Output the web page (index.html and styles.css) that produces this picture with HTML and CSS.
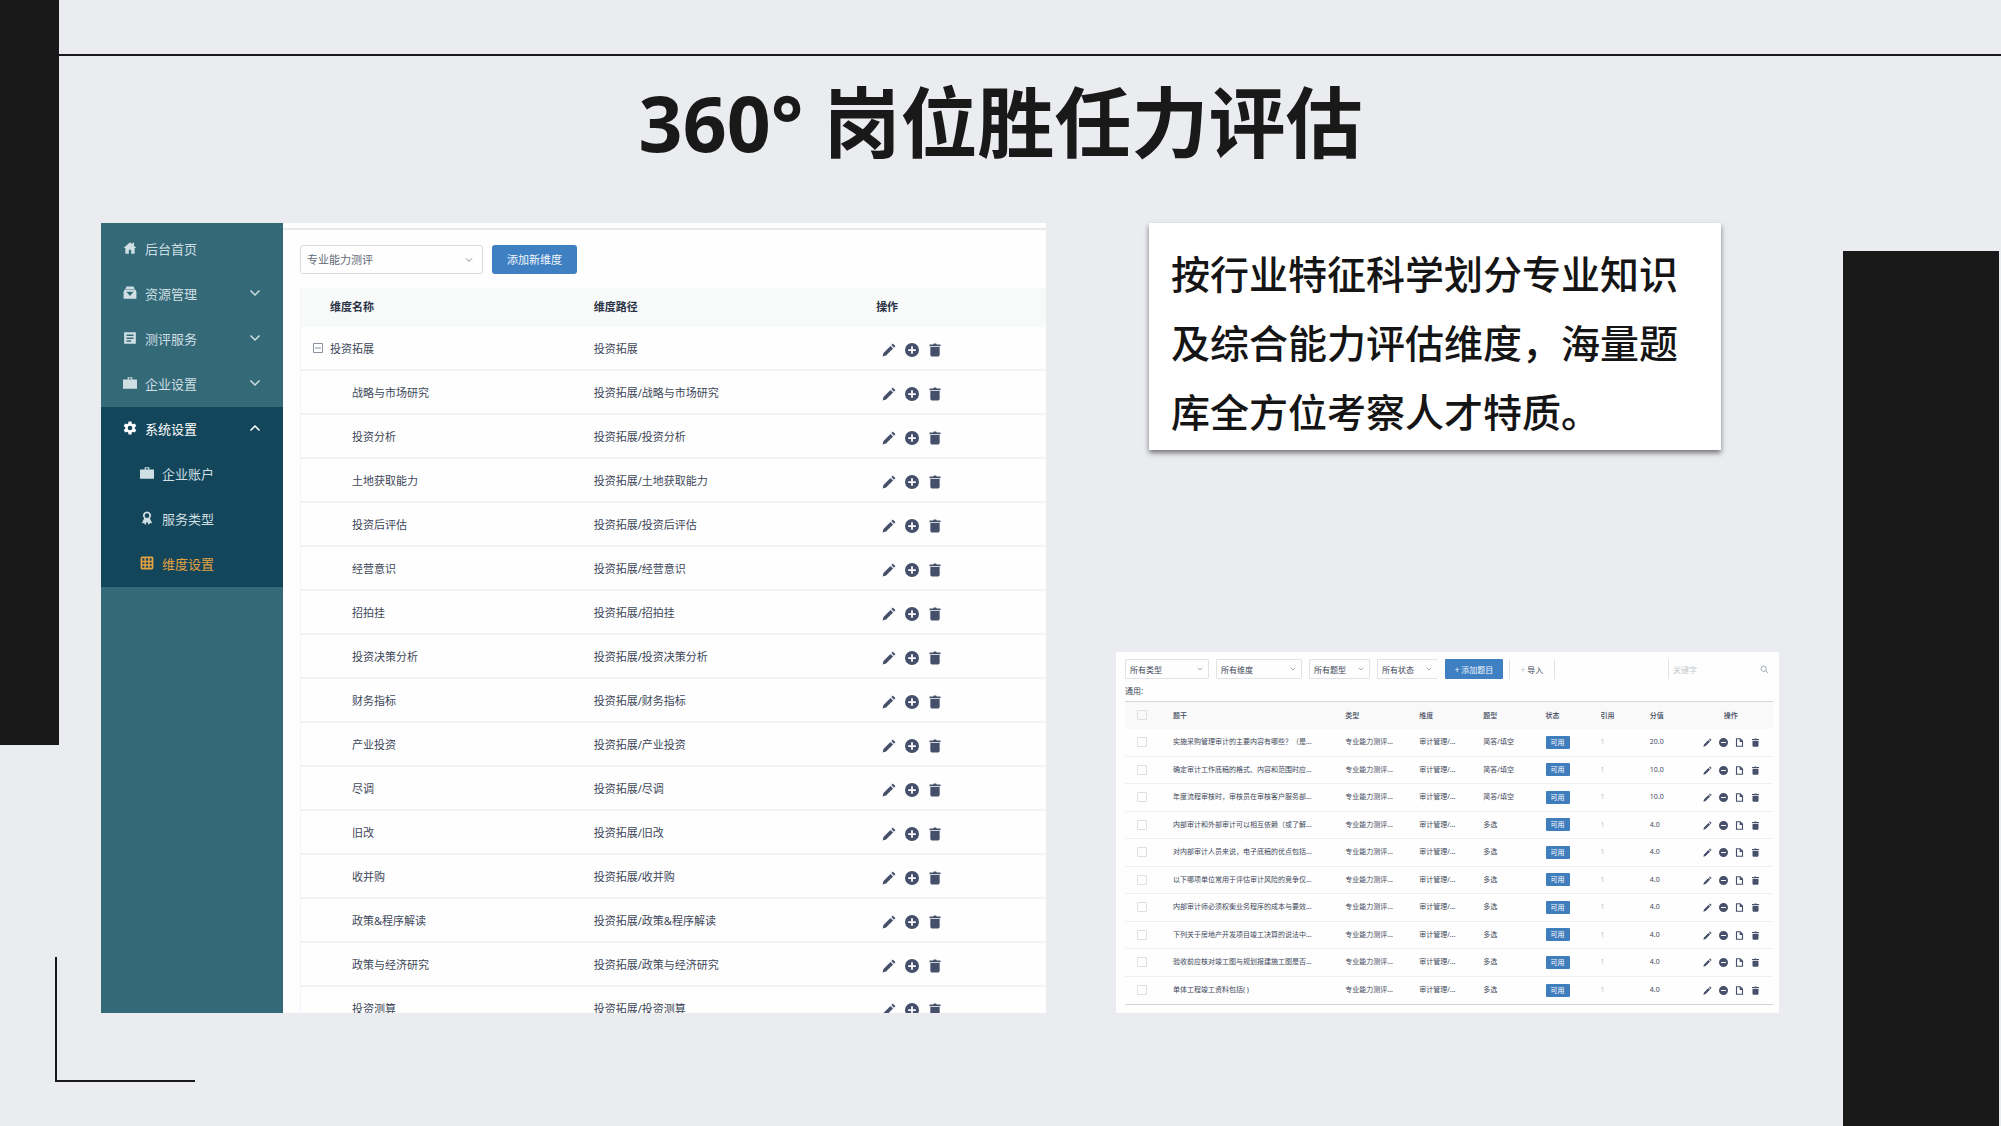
FILE: index.html
```html
<!DOCTYPE html>
<html lang="zh-CN">
<head>
<meta charset="utf-8">
<meta name="viewport" content="width=device-width, initial-scale=1">
<title>360° 岗位胜任力评估</title>
<link rel="stylesheet" href="styles.css">
</head>
<body>
<svg class="sprite" aria-hidden="true">
  <symbol id="home" viewBox="0 0 24 24"><path d="M12 2 1 12h3v10h6v-7h4v7h6V12h3l-4-3.600V3h-3v2.600z"/></symbol>
  <symbol id="inbox" viewBox="0 0 24 24"><path d="M6 1h12l2 4H4zM3 6h18l2 4v12H1V10zm2 4 2 1 5 6 5-6 2-1z" fill-rule="evenodd"/></symbol>
  <symbol id="doc" viewBox="0 0 24 24"><path d="M2 2h20v20H2zm4 4v2.500h12V6zm0 5v2.500h12V11zm0 5v2.500h8V16z" fill-rule="evenodd"/></symbol>
  <symbol id="case" viewBox="0 0 24 24"><path d="M8 2h8v4h8v16H0V6h8zm2 2v2h4V4z" fill-rule="evenodd"/></symbol>
  <symbol id="gear" viewBox="0 0 24 24"><path d="M9.500 1h5l.6 3.300 2 1.100 3.200-1.200 2.500 4.300-2.600 2.200v2.600l2.600 2.200-2.500 4.300-3.200-1.200-2 1.100-.6 3.300h-5l-.6-3.300-2-1.100-3.200 1.200-2.500-4.300 2.600-2.200v-2.600L1.200 8.500l2.500-4.300 3.200 1.200 2-1.100zM12 8a4 4 0 1 0 0 8 4 4 0 0 0 0-8z" fill-rule="evenodd"/></symbol>
  <symbol id="medal" viewBox="0 0 24 24"><path d="M12 1a7 7 0 0 1 5 12l4 8-4-.5L15 24l-3-6-3 6-2-3.500-4 .5 4-8a7 7 0 0 1 5-12zm0 3a4 4 0 1 0 0 8 4 4 0 0 0 0-8z" fill-rule="evenodd"/></symbol>
  <symbol id="grid" viewBox="0 0 24 24"><path d="M3 1h18l2 2v18l-2 2H3l-2-2V3zm1 3v4h3.500V4zm6 0v4h4V4zm6.500 0v4H20V4zM4 10.500v3.500h3.500v-3.500zm6 0v3.500h4v-3.500zm6.500 0v3.500H20v-3.500zM4 16.500V20h3.500v-3.500zm6 0V20h4v-3.500zm6.500 0V20H20v-3.500z" fill-rule="evenodd"/></symbol>
  <symbol id="down" viewBox="0 0 24 24"><path d="m3 7 9 9 9-9" fill="none" stroke="currentColor" stroke-width="3"/></symbol>
  <symbol id="up" viewBox="0 0 24 24"><path d="m3 17 9-9 9 9" fill="none" stroke="currentColor" stroke-width="3"/></symbol>
  <symbol id="minus-box" viewBox="0 0 12 12"><path d="M1.500 1.500h9v9h-9zM3 6h6" fill="none" stroke="currentColor"/></symbol>
  <symbol id="pencil" viewBox="0 0 24 24"><path d="m1 23 1.500-6L14.500 5l4.500 4.500L7 21.500zM16 3.500 18.500 1 23 5.500 20.500 8z"/></symbol>
  <symbol id="plus" viewBox="0 0 24 24"><path d="M12 0a12 12 0 1 1 0 24 12 12 0 0 1 0-24zm-1.500 5.500v5h-5v3h5v5h3v-5h5v-3h-5v-5z" fill-rule="evenodd"/></symbol>
  <symbol id="minus" viewBox="0 0 24 24"><path d="M12 0a12 12 0 1 1 0 24 12 12 0 0 1 0-24zM5.500 10.500v3h13v-3z" fill-rule="evenodd"/></symbol>
  <symbol id="trash" viewBox="0 0 24 24"><path d="M2.500 2.500H9L10 1h4l1 1.500h6.500v3h-19zM4 7h16v14l-2 2H6l-2-2z"/></symbol>
  <symbol id="copy" viewBox="0 0 24 24"><path d="M4 2h10l6 6v14H4zM14 2v7h6" fill="none" stroke="currentColor" stroke-width="3"/></symbol>
  <symbol id="search" viewBox="0 0 24 24"><path d="M10 3a7 7 0 1 0 0 14 7 7 0 0 0 0-14zm5 12 7 7" fill="none" stroke="currentColor" stroke-width="2"/></symbol>
</svg>

<div class="slide">
  <div class="bar bar-left"></div>
  <div class="bar bar-right"></div>
  <div class="rule"></div>
  <div class="corner"></div>

  <h1 class="title">360° 岗位胜任力评估</h1>

  <main class="board">
    <section class="panel admin" aria-label="维度设置">
      <nav class="side">
        <a class="item" href="#"><svg><use href="#home"/></svg><span>后台首页</span></a>
        <a class="item" href="#"><svg><use href="#inbox"/></svg><span>资源管理</span><svg class="arrow"><use href="#down"/></svg></a>
        <a class="item" href="#"><svg><use href="#doc"/></svg><span>测评服务</span><svg class="arrow"><use href="#down"/></svg></a>
        <a class="item" href="#"><svg><use href="#case"/></svg><span>企业设置</span><svg class="arrow"><use href="#down"/></svg></a>
        <div class="group">
          <a class="item open" href="#"><svg><use href="#gear"/></svg><span>系统设置</span><svg class="arrow"><use href="#up"/></svg></a>
          <a class="item sub" href="#"><svg><use href="#case"/></svg><span>企业账户</span></a>
          <a class="item sub" href="#"><svg><use href="#medal"/></svg><span>服务类型</span></a>
          <a class="item sub current" href="#"><svg><use href="#grid"/></svg><span>维度设置</span></a>
        </div>
      </nav>
      <div class="content">
        <div class="tools">
          <label class="select kind"><select aria-label="测评类型"><option>专业能力测评</option></select><svg><use href="#down"/></svg></label>
          <button class="primary" type="button">添加新维度</button>
        </div>
        <table class="dims">
          <colgroup><col class="c-name"><col class="c-path"><col></colgroup>
          <thead><tr><th>维度名称</th><th>维度路径</th><th>操作</th></tr></thead>
          <tbody>
            <tr class="root"><td><div class="node"><button class="toggle" type="button" aria-label="收起"><svg><use href="#minus-box"/></svg></button>投资拓展</div></td><td>投资拓展</td><td><div class="ops"><button type="button" aria-label="编辑"><svg><use href="#pencil"/></svg></button><button type="button" aria-label="添加"><svg><use href="#plus"/></svg></button><button type="button" aria-label="删除"><svg><use href="#trash"/></svg></button></div></td></tr>
            <tr><td>战略与市场研究</td><td>投资拓展/战略与市场研究</td><td><div class="ops"><button type="button" aria-label="编辑"><svg><use href="#pencil"/></svg></button><button type="button" aria-label="添加"><svg><use href="#plus"/></svg></button><button type="button" aria-label="删除"><svg><use href="#trash"/></svg></button></div></td></tr>
            <tr><td>投资分析</td><td>投资拓展/投资分析</td><td><div class="ops"><button type="button" aria-label="编辑"><svg><use href="#pencil"/></svg></button><button type="button" aria-label="添加"><svg><use href="#plus"/></svg></button><button type="button" aria-label="删除"><svg><use href="#trash"/></svg></button></div></td></tr>
            <tr><td>土地获取能力</td><td>投资拓展/土地获取能力</td><td><div class="ops"><button type="button" aria-label="编辑"><svg><use href="#pencil"/></svg></button><button type="button" aria-label="添加"><svg><use href="#plus"/></svg></button><button type="button" aria-label="删除"><svg><use href="#trash"/></svg></button></div></td></tr>
            <tr><td>投资后评估</td><td>投资拓展/投资后评估</td><td><div class="ops"><button type="button" aria-label="编辑"><svg><use href="#pencil"/></svg></button><button type="button" aria-label="添加"><svg><use href="#plus"/></svg></button><button type="button" aria-label="删除"><svg><use href="#trash"/></svg></button></div></td></tr>
            <tr><td>经营意识</td><td>投资拓展/经营意识</td><td><div class="ops"><button type="button" aria-label="编辑"><svg><use href="#pencil"/></svg></button><button type="button" aria-label="添加"><svg><use href="#plus"/></svg></button><button type="button" aria-label="删除"><svg><use href="#trash"/></svg></button></div></td></tr>
            <tr><td>招拍挂</td><td>投资拓展/招拍挂</td><td><div class="ops"><button type="button" aria-label="编辑"><svg><use href="#pencil"/></svg></button><button type="button" aria-label="添加"><svg><use href="#plus"/></svg></button><button type="button" aria-label="删除"><svg><use href="#trash"/></svg></button></div></td></tr>
            <tr><td>投资决策分析</td><td>投资拓展/投资决策分析</td><td><div class="ops"><button type="button" aria-label="编辑"><svg><use href="#pencil"/></svg></button><button type="button" aria-label="添加"><svg><use href="#plus"/></svg></button><button type="button" aria-label="删除"><svg><use href="#trash"/></svg></button></div></td></tr>
            <tr><td>财务指标</td><td>投资拓展/财务指标</td><td><div class="ops"><button type="button" aria-label="编辑"><svg><use href="#pencil"/></svg></button><button type="button" aria-label="添加"><svg><use href="#plus"/></svg></button><button type="button" aria-label="删除"><svg><use href="#trash"/></svg></button></div></td></tr>
            <tr><td>产业投资</td><td>投资拓展/产业投资</td><td><div class="ops"><button type="button" aria-label="编辑"><svg><use href="#pencil"/></svg></button><button type="button" aria-label="添加"><svg><use href="#plus"/></svg></button><button type="button" aria-label="删除"><svg><use href="#trash"/></svg></button></div></td></tr>
            <tr><td>尽调</td><td>投资拓展/尽调</td><td><div class="ops"><button type="button" aria-label="编辑"><svg><use href="#pencil"/></svg></button><button type="button" aria-label="添加"><svg><use href="#plus"/></svg></button><button type="button" aria-label="删除"><svg><use href="#trash"/></svg></button></div></td></tr>
            <tr><td>旧改</td><td>投资拓展/旧改</td><td><div class="ops"><button type="button" aria-label="编辑"><svg><use href="#pencil"/></svg></button><button type="button" aria-label="添加"><svg><use href="#plus"/></svg></button><button type="button" aria-label="删除"><svg><use href="#trash"/></svg></button></div></td></tr>
            <tr><td>收并购</td><td>投资拓展/收并购</td><td><div class="ops"><button type="button" aria-label="编辑"><svg><use href="#pencil"/></svg></button><button type="button" aria-label="添加"><svg><use href="#plus"/></svg></button><button type="button" aria-label="删除"><svg><use href="#trash"/></svg></button></div></td></tr>
            <tr><td>政策&amp;程序解读</td><td>投资拓展/政策&amp;程序解读</td><td><div class="ops"><button type="button" aria-label="编辑"><svg><use href="#pencil"/></svg></button><button type="button" aria-label="添加"><svg><use href="#plus"/></svg></button><button type="button" aria-label="删除"><svg><use href="#trash"/></svg></button></div></td></tr>
            <tr><td>政策与经济研究</td><td>投资拓展/政策与经济研究</td><td><div class="ops"><button type="button" aria-label="编辑"><svg><use href="#pencil"/></svg></button><button type="button" aria-label="添加"><svg><use href="#plus"/></svg></button><button type="button" aria-label="删除"><svg><use href="#trash"/></svg></button></div></td></tr>
            <tr><td>投资测算</td><td>投资拓展/投资测算</td><td><div class="ops"><button type="button" aria-label="编辑"><svg><use href="#pencil"/></svg></button><button type="button" aria-label="添加"><svg><use href="#plus"/></svg></button><button type="button" aria-label="删除"><svg><use href="#trash"/></svg></button></div></td></tr>
          </tbody>
        </table>
      </div>
    </section>

    <div class="aside">
      <p class="note">按行业特征科学划分专业知识及综合能力评估维度，海量题库全方位考察人才特质。</p>

      <section class="panel bank" aria-label="题库">
        <div class="filters">
          <label class="select f-type"><select aria-label="类型"><option>所有类型</option></select><svg><use href="#down"/></svg></label>
          <label class="select f-dim"><select aria-label="维度"><option>所有维度</option></select><svg><use href="#down"/></svg></label>
          <label class="select f-small"><select aria-label="题型"><option>所有题型</option></select><svg><use href="#down"/></svg></label>
          <label class="select f-small f-state"><select aria-label="状态"><option>所有状态</option></select><svg><use href="#down"/></svg></label>
          <button class="primary" type="button">+ 添加题目</button>
          <button class="import" type="button"><span class="faint">+</span> 导入</button>
          <label class="search"><input type="text" placeholder="关键字" aria-label="关键字"><svg><use href="#search"/></svg></label>
        </div>
        <div class="scope">通用:</div>
        <table class="items">
          <colgroup><col class="q-check"><col class="q-stem"><col class="q-type"><col class="q-dim"><col class="q-form"><col class="q-state"><col class="q-ref"><col class="q-score"><col></colgroup>
          <thead><tr><th><input type="checkbox" aria-label="全选"></th><th>题干</th><th>类型</th><th>维度</th><th>题型</th><th>状态</th><th>引用</th><th>分值</th><th>操作</th></tr></thead>
          <tbody>
            <tr><td><input type="checkbox" aria-label="选择"></td><td>实施采购管理审计的主要内容有哪些？（是...</td><td>专业能力测评...</td><td>审计管理/...</td><td>简答/填空</td><td><span class="badge">可用</span></td><td>1</td><td>20.0</td><td><div class="ops"><button type="button" aria-label="编辑"><svg><use href="#pencil"/></svg></button><button type="button" aria-label="停用"><svg><use href="#minus"/></svg></button><button type="button" aria-label="复制"><svg><use href="#copy"/></svg></button><button type="button" aria-label="删除"><svg><use href="#trash"/></svg></button></div></td></tr>
            <tr><td><input type="checkbox" aria-label="选择"></td><td>确定审计工作底稿的格式、内容和范围时应...</td><td>专业能力测评...</td><td>审计管理/...</td><td>简答/填空</td><td><span class="badge">可用</span></td><td>1</td><td>10.0</td><td><div class="ops"><button type="button" aria-label="编辑"><svg><use href="#pencil"/></svg></button><button type="button" aria-label="停用"><svg><use href="#minus"/></svg></button><button type="button" aria-label="复制"><svg><use href="#copy"/></svg></button><button type="button" aria-label="删除"><svg><use href="#trash"/></svg></button></div></td></tr>
            <tr><td><input type="checkbox" aria-label="选择"></td><td>年度流程审核时，审核员在审核客户服务部...</td><td>专业能力测评...</td><td>审计管理/...</td><td>简答/填空</td><td><span class="badge">可用</span></td><td>1</td><td>10.0</td><td><div class="ops"><button type="button" aria-label="编辑"><svg><use href="#pencil"/></svg></button><button type="button" aria-label="停用"><svg><use href="#minus"/></svg></button><button type="button" aria-label="复制"><svg><use href="#copy"/></svg></button><button type="button" aria-label="删除"><svg><use href="#trash"/></svg></button></div></td></tr>
            <tr><td><input type="checkbox" aria-label="选择"></td><td>内部审计和外部审计可以相互依赖（或了解...</td><td>专业能力测评...</td><td>审计管理/...</td><td>多选</td><td><span class="badge">可用</span></td><td>1</td><td>4.0</td><td><div class="ops"><button type="button" aria-label="编辑"><svg><use href="#pencil"/></svg></button><button type="button" aria-label="停用"><svg><use href="#minus"/></svg></button><button type="button" aria-label="复制"><svg><use href="#copy"/></svg></button><button type="button" aria-label="删除"><svg><use href="#trash"/></svg></button></div></td></tr>
            <tr><td><input type="checkbox" aria-label="选择"></td><td>对内部审计人员来说，电子底稿的优点包括...</td><td>专业能力测评...</td><td>审计管理/...</td><td>多选</td><td><span class="badge">可用</span></td><td>1</td><td>4.0</td><td><div class="ops"><button type="button" aria-label="编辑"><svg><use href="#pencil"/></svg></button><button type="button" aria-label="停用"><svg><use href="#minus"/></svg></button><button type="button" aria-label="复制"><svg><use href="#copy"/></svg></button><button type="button" aria-label="删除"><svg><use href="#trash"/></svg></button></div></td></tr>
            <tr><td><input type="checkbox" aria-label="选择"></td><td>以下哪项单位常用于评估审计风险的竞争仅...</td><td>专业能力测评...</td><td>审计管理/...</td><td>多选</td><td><span class="badge">可用</span></td><td>1</td><td>4.0</td><td><div class="ops"><button type="button" aria-label="编辑"><svg><use href="#pencil"/></svg></button><button type="button" aria-label="停用"><svg><use href="#minus"/></svg></button><button type="button" aria-label="复制"><svg><use href="#copy"/></svg></button><button type="button" aria-label="删除"><svg><use href="#trash"/></svg></button></div></td></tr>
            <tr><td><input type="checkbox" aria-label="选择"></td><td>内部审计师必须权衡业务程序的成本与要效...</td><td>专业能力测评...</td><td>审计管理/...</td><td>多选</td><td><span class="badge">可用</span></td><td>1</td><td>4.0</td><td><div class="ops"><button type="button" aria-label="编辑"><svg><use href="#pencil"/></svg></button><button type="button" aria-label="停用"><svg><use href="#minus"/></svg></button><button type="button" aria-label="复制"><svg><use href="#copy"/></svg></button><button type="button" aria-label="删除"><svg><use href="#trash"/></svg></button></div></td></tr>
            <tr><td><input type="checkbox" aria-label="选择"></td><td>下列关于房地产开发项目竣工决算的说法中...</td><td>专业能力测评...</td><td>审计管理/...</td><td>多选</td><td><span class="badge">可用</span></td><td>1</td><td>4.0</td><td><div class="ops"><button type="button" aria-label="编辑"><svg><use href="#pencil"/></svg></button><button type="button" aria-label="停用"><svg><use href="#minus"/></svg></button><button type="button" aria-label="复制"><svg><use href="#copy"/></svg></button><button type="button" aria-label="删除"><svg><use href="#trash"/></svg></button></div></td></tr>
            <tr><td><input type="checkbox" aria-label="选择"></td><td>验收前应核对竣工图与规划报建施工图是否...</td><td>专业能力测评...</td><td>审计管理/...</td><td>多选</td><td><span class="badge">可用</span></td><td>1</td><td>4.0</td><td><div class="ops"><button type="button" aria-label="编辑"><svg><use href="#pencil"/></svg></button><button type="button" aria-label="停用"><svg><use href="#minus"/></svg></button><button type="button" aria-label="复制"><svg><use href="#copy"/></svg></button><button type="button" aria-label="删除"><svg><use href="#trash"/></svg></button></div></td></tr>
            <tr><td><input type="checkbox" aria-label="选择"></td><td>单体工程竣工资料包括( )</td><td>专业能力测评...</td><td>审计管理/...</td><td>多选</td><td><span class="badge">可用</span></td><td>1</td><td>4.0</td><td><div class="ops"><button type="button" aria-label="编辑"><svg><use href="#pencil"/></svg></button><button type="button" aria-label="停用"><svg><use href="#minus"/></svg></button><button type="button" aria-label="复制"><svg><use href="#copy"/></svg></button><button type="button" aria-label="删除"><svg><use href="#trash"/></svg></button></div></td></tr>
          </tbody>
        </table>
      </section>
    </div>
  </main>
</div>
</body>
</html>
```
FILE: styles.css
```css
* { box-sizing: border-box; }

body {
  margin: 0;
  background: #eaecef;
  color: #3d4759;
  font-family: "Noto Sans", "Noto Sans CJK SC", sans-serif;
}

a { color: inherit; text-decoration: none; }
button, select, input { margin: 0; padding: 0; border: 0; background: none; color: inherit; font: inherit; }
svg { display: block; fill: currentColor; }
.sprite { display: none; }

/* Slide frame */
.slide {
  position: relative;
  display: flex;
  flex-direction: column;
  height: 100vh;
  padding: 60px 0 113px;
  overflow: hidden;
}
.bar { position: absolute; background: #191919; }
.bar-left { left: 0; top: 0; width: 59px; height: 745px; }
.bar-right { right: 2px; top: 251px; bottom: 0; width: 156px; }
.rule { position: absolute; left: 59px; right: 0; top: 54px; height: 2px; background: #191919; }
.corner {
  position: absolute;
  left: 55px;
  bottom: 44px;
  width: 140px;
  height: 125px;
  border: solid #191919;
  border-width: 0 0 2px 2px;
}

.title {
  margin: 0;
  height: 163px;
  color: #191919;
  font-size: 77px;
  font-weight: 700;
  line-height: 126px;
  text-align: center;
}

.board {
  flex: 1;
  min-height: 0;
  display: grid;
  grid-template-columns: 945fr 663fr;
  grid-template-rows: minmax(0, 1fr);
  gap: 70px;
  padding: 0 222px 0 101px;
}
.panel { background: #fefefe; overflow: hidden; }

/* Admin panel */
.admin { display: grid; grid-template-columns: 182px 1fr; font-size: 11px; }

.side { padding-top: 4px; background: #346978; color: #cfdfe3; font-size: 13px; }
.item { display: flex; align-items: center; gap: 8px; height: 45px; padding: 0 22px 3px; }
.item svg { width: 14px; height: 14px; }
.item .arrow { width: 12px; height: 12px; margin-left: auto; }
.group { background: #13465a; }
.open { color: #fff; }
.sub { padding-left: 39px; }
.current { color: #e5a13f; }

.content { padding: 17px 0 0 17px; border-top: 5px solid #fefefe; box-shadow: inset 0 2px #e7e9ea; }
.tools { display: flex; gap: 9px; height: 29px; margin-bottom: 14px; }
.select { display: grid; align-items: center; border: 1px solid #d7dadf; border-radius: 3px; }
.select select { grid-area: 1 / 1; width: 100%; height: 100%; padding-left: 6px; appearance: none; outline: 0; }
.select svg { grid-area: 1 / 1; justify-self: end; width: 8px; height: 8px; margin-right: 9px; color: #8a919d; pointer-events: none; }
.kind { width: 183px; color: #626a77; }
.primary { padding-bottom: 2px; border-radius: 3px; background: #3f80c2; color: #f2f7fc; }
.tools .primary { width: 85px; }

table { width: 100%; border-collapse: separate; border-spacing: 0; table-layout: fixed; }
th, td { padding: 0; text-align: left; white-space: nowrap; }
.ops { display: flex; color: #46506a; }
.ops svg { width: 100%; height: 100%; }

.dims { border-left: 1px solid #f3f4f5; }
.c-name { width: 39.3%; }
.c-path { width: 37.9%; }
.dims th { height: 39px; padding-bottom: 3px; background: #f8f9f9; color: #2b3447; font-weight: 700; }
.dims td { height: 44px; border-bottom: 2px solid #f3f4f5; }
.dims th:first-child { padding-left: 29px; }
.dims td:first-child { padding-left: 51px; }
.dims .root td:first-child { padding-left: 11px; }
.node { display: flex; align-items: center; gap: 6px; }
.toggle, .toggle svg { width: 12px; height: 12px; }
.toggle { color: #8a919d; }
.dims .ops { gap: 9px; padding: 3px 0 0 6px; }
.dims .ops button { width: 14px; height: 14px; }

/* Right column */
.aside { display: flex; flex-direction: column; justify-content: space-between; min-width: 0; }
.note {
  margin: 0 58px 0 33px;
  padding: 16px 22px 4px;
  background: #fff;
  box-shadow: 0 3px 5px rgba(0, 0, 0, .5);
  color: #151515;
  font-size: 39px;
  font-weight: 500;
  line-height: 69px;
}

/* Question bank */
.bank { padding: 7px 6px 8px 9px; border-radius: 2px; font-size: 7px; }
.filters { display: flex; height: 20px; font-size: 8px; }
.filters .select { margin-right: 7px; border-color: #e1e3e6; border-radius: 1px; }
.filters .select select { padding-left: 4px; }
.filters .select svg { width: 6px; height: 6px; margin-right: 5px; }
.f-type { width: 84px; }
.f-dim { width: 86px; }
.f-small { width: 61px; }
.filters .f-state { border-right-color: transparent; }
.filters .primary { width: 58px; padding: 0; border-radius: 1px; }
.import { width: 46px; margin-left: 6px; border: solid #e1e3e6; border-width: 0 1px; }
.faint { color: #b9bec6; }
.search { display: flex; align-items: center; width: 105px; margin-left: auto; padding: 0 4px; border-left: 1px solid #e1e3e6; color: #8a919d; }
.search input { flex: 1; min-width: 0; outline: 0; }
.search input::placeholder { color: #c3c7cd; opacity: 1; }
.search svg { width: 9px; height: 9px; }
.scope { height: 22px; font-size: 8px; line-height: 24px; }

.items { height: 304px; border-top: 1px solid #d3d6da; border-bottom: 1px solid #cdd3d6; }
.q-check { width: 7.4%; }
.q-stem { width: 26.6%; }
.q-type { width: 11.4%; }
.q-dim { width: 9.9%; }
.q-form { width: 9.6%; }
.q-state { width: 8.5%; }
.q-ref { width: 7.6%; }
.q-score { width: 7.4%; }
.items th { height: 27px; padding-bottom: 1px; background: #f9f9fa; font-weight: 500; }
.items td { height: 27px; border-bottom: 1px solid #eff0f2; line-height: 10px; }
.items tr:last-child td { border-bottom: 0; }
.items th:first-child, .items td:first-child { padding-left: 12px; }
.items th:last-child { padding-left: 26px; }
.items td:nth-child(7) { color: #b9bec6; }
.items input { display: block; width: 10px; height: 10px; border: 1px solid #dcdfe3; border-radius: 1px; appearance: none; }
.badge { display: block; width: 24px; height: 13px; border-radius: 1px; background: #3f7dbc; color: #fff; line-height: 13px; text-align: center; }
.items .ops { gap: 7px; padding: 1px 0 0 5px; }
.items .ops button { width: 9px; height: 9px; }
```
